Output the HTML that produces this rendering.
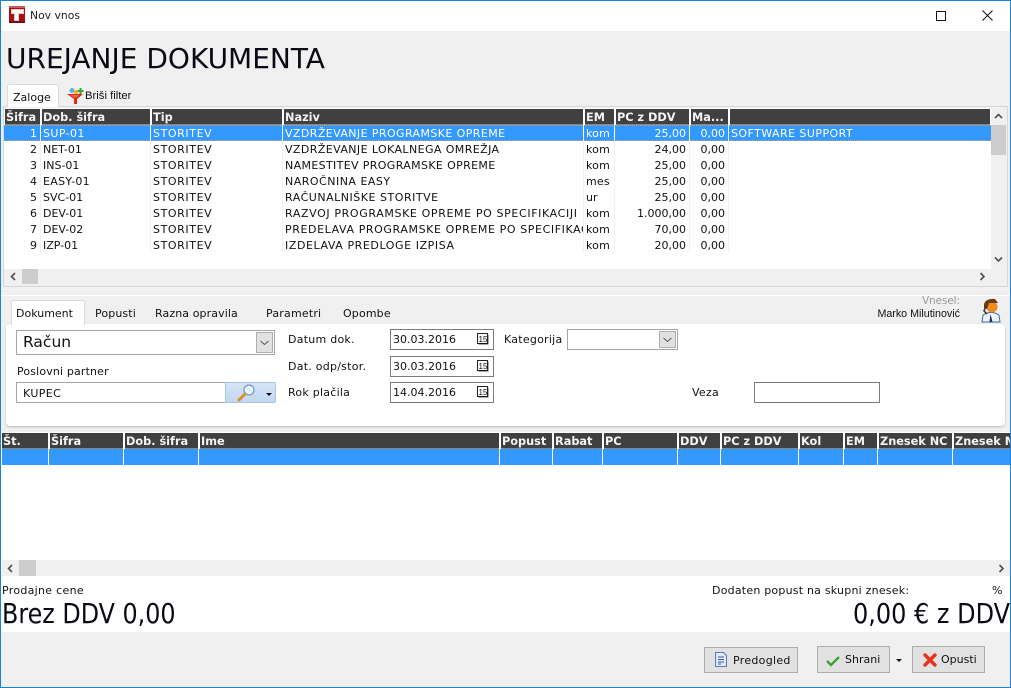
<!DOCTYPE html>
<html><head><meta charset="utf-8"><title>Nov vnos</title>
<style>
*{box-sizing:border-box}
html,body{margin:0;padding:0}
body{width:1011px;height:688px;position:relative;overflow:hidden;background:#f0f0f0;font-family:"DejaVu Sans","Liberation Sans",sans-serif;font-size:11px;color:#111}
.a,.t,.h,.c,.r{position:absolute}
.t,.h,.c,.r{white-space:nowrap;line-height:16px;height:16px}
.c,.r{line-height:18px}
.h{background:#404040;color:#f4f4f4;font-weight:bold;padding-left:1px;font-size:11.300px;line-height:17px;overflow:hidden;border-bottom:1px solid #888}
.c{overflow:hidden;padding-left:2px}
.r{text-align:right;padding-right:3px}
.w{color:#fff}
.l{letter-spacing:.25px}
.sep{position:absolute;width:1px;background:#f0f0f0}
.in{position:absolute;background:#fff;border:1px solid #7a7a7a;height:21px;line-height:19px;padding-left:3px}
.btn{position:absolute;background:#e1e1e1;border:1px solid #adadad;height:27px;line-height:25px}
.arr{position:absolute;width:0;height:0;border-left:3px solid transparent;border-right:3px solid transparent;border-top:3px solid #111}
.dot{position:absolute;left:4px;width:987px;height:1px;background:repeating-linear-gradient(90deg,#c9a070 0 1px,#3399ff 1px 2px)}
</style></head><body>
<!-- window -->
<div class="a" style="left:0;top:0;width:1011px;height:31px;background:#fff"></div>
<svg class="a" style="left:9px;top:6px" width="16" height="17" viewBox="0 0 16 17"><rect width="16" height="17" fill="#a81016"/><rect x="0" y="0" width="16" height="2" fill="#c95a5e"/><rect x="0" y="15" width="16" height="2" fill="#7a0a0e"/><path d="M2 3H15V8H10V15H5V8H2Z" fill="#f0c8c8"/><path d="M3 4H14V7H9V14H6V7H3Z" fill="#fff"/></svg>
<div class="t" style="left:30px;top:8px;font-size:10.800px;color:#222">Nov vnos</div>
<div class="a" style="left:936px;top:11px;width:10px;height:10px;border:1px solid #111"></div>
<svg class="a" style="left:982px;top:10px" width="11" height="11"><path d="M.5 .5L10.5 10.5M10.5 .5L.5 10.5" stroke="#111" stroke-width="1"/></svg>
<div class="t" style="left:6px;top:43px;height:32px;line-height:32px;font-size:28px;color:#0a0a14">UREJANJE DOKUMENTA</div>

<!-- top tab -->
<div class="a" style="left:3px;top:106px;width:1005px;height:181px;border:1px solid #d4d9de;background:#f0f0f0"></div>
<div class="a" style="left:7px;top:84px;width:52px;height:23px;background:#fff;border:1px solid #d4dde2;border-bottom:0;border-radius:3px 3px 0 0"></div>
<div class="t" style="left:13px;top:90px;">Zaloge</div>
<svg class="a" style="left:67px;top:87px" width="17" height="18" viewBox="0 0 17 18"><path d="M0 7H16L10 12V17H7V12Z" fill="#e02a1c"/><path d="M3 8H12L9 10.500H7Z" fill="#f06a40"/><circle cx="5" cy="3.500" r="2.500" fill="#6ab0e8"/><circle cx="9" cy="5" r="2" fill="#f0b020"/><path d="M12.500 1h2v2h2v2h-2v2h-2v-2h-2v-2h2z" fill="#3aa830"/></svg>
<div class="t" style="left:85px;top:88px;font-family:'Liberation Sans',sans-serif;font-size:11.300px;">Briši filter</div>

<!-- top grid -->
<div class="a" style="left:4px;top:108px;width:987px;height:161px;background:#fff"></div>
<div class="h" style="left:5px;top:109px;width:35px">Šifra</div>
<div class="h" style="left:42px;top:109px;width:108px">Dob. šifra</div>
<div class="h" style="left:152px;top:109px;width:130px">Tip</div>
<div class="h" style="left:284px;top:109px;width:299px">Naziv</div>
<div class="h" style="left:585px;top:109px;width:29px">EM</div>
<div class="h" style="left:616px;top:109px;width:73px">PC z DDV</div>
<div class="h" style="left:691px;top:109px;width:37px">Ma...</div>
<div class="h" style="left:730px;top:109px;width:260px"></div>
<div class="a" style="left:4px;top:125px;width:987px;height:16px;background:#3399ff"></div>
<div class="dot" style="top:125px"></div><div class="dot" style="top:140px"></div>
<div class="sep" style="left:40px;top:141px;height:112px"></div><div class="sep" style="left:150px;top:141px;height:112px"></div><div class="sep" style="left:282px;top:141px;height:112px"></div><div class="sep" style="left:583px;top:141px;height:112px"></div><div class="sep" style="left:614px;top:141px;height:112px"></div><div class="sep" style="left:689px;top:141px;height:112px"></div><div class="sep" style="left:728px;top:141px;height:112px"></div>
<div class="sep" style="left:40px;top:125px;height:16px;background:#fff"></div><div class="sep" style="left:150px;top:125px;height:16px;background:#fff"></div><div class="sep" style="left:282px;top:125px;height:16px;background:#fff"></div><div class="sep" style="left:583px;top:125px;height:16px;background:#fff"></div><div class="sep" style="left:614px;top:125px;height:16px;background:#fff"></div><div class="sep" style="left:689px;top:125px;height:16px;background:#fff"></div><div class="sep" style="left:728px;top:125px;height:16px;background:#fff"></div>

<div class="r w" style="left:4px;top:125px;width:36px">1</div><div class="c w" style="left:41px;top:125px;width:109px;letter-spacing:.4px">SUP-01</div><div class="c w" style="left:151px;top:125px;width:131px;letter-spacing:.6px">STORITEV</div><div class="c w" style="left:283px;top:125px;width:300px;letter-spacing:.41px">VZDRŽEVANJE PROGRAMSKE OPREME</div><div class="c w" style="left:584px;top:125px;width:30px;letter-spacing:.2px">kom</div><div class="r w" style="left:615px;top:125px;width:74px">25,00</div><div class="r w" style="left:690px;top:125px;width:38px">0,00</div><div class="c w" style="left:729px;top:125px;width:260px;letter-spacing:.45px">SOFTWARE SUPPORT</div>

<div class="r" style="left:4px;top:141px;width:36px">2</div><div class="c" style="left:41px;top:141px;width:109px">NET-01</div><div class="c" style="left:151px;top:141px;width:131px;letter-spacing:.6px">STORITEV</div><div class="c" style="left:283px;top:141px;width:300px;letter-spacing:.41px">VZDRŽEVANJE LOKALNEGA OMREŽJA</div><div class="c" style="left:584px;top:141px;width:30px;letter-spacing:.2px">kom</div><div class="r" style="left:615px;top:141px;width:74px">24,00</div><div class="r" style="left:690px;top:141px;width:38px">0,00</div>

<div class="r" style="left:4px;top:157px;width:36px">3</div><div class="c" style="left:41px;top:157px;width:109px">INS-01</div><div class="c" style="left:151px;top:157px;width:131px;letter-spacing:.6px">STORITEV</div><div class="c" style="left:283px;top:157px;width:300px;letter-spacing:.36px">NAMESTITEV PROGRAMSKE OPREME</div><div class="c" style="left:584px;top:157px;width:30px;letter-spacing:.2px">kom</div><div class="r" style="left:615px;top:157px;width:74px">25,00</div><div class="r" style="left:690px;top:157px;width:38px">0,00</div>

<div class="r" style="left:4px;top:173px;width:36px">4</div><div class="c" style="left:41px;top:173px;width:109px;letter-spacing:.3px">EASY-01</div><div class="c" style="left:151px;top:173px;width:131px;letter-spacing:.6px">STORITEV</div><div class="c" style="left:283px;top:173px;width:300px;letter-spacing:.5px">NAROČNINA EASY</div><div class="c" style="left:584px;top:173px;width:30px;letter-spacing:.2px">mes</div><div class="r" style="left:615px;top:173px;width:74px">25,00</div><div class="r" style="left:690px;top:173px;width:38px">0,00</div>

<div class="r" style="left:4px;top:189px;width:36px">5</div><div class="c" style="left:41px;top:189px;width:109px">SVC-01</div><div class="c" style="left:151px;top:189px;width:131px;letter-spacing:.6px">STORITEV</div><div class="c" style="left:283px;top:189px;width:300px;letter-spacing:.52px">RAČUNALNIŠKE STORITVE</div><div class="c" style="left:584px;top:189px;width:30px">ur</div><div class="r" style="left:615px;top:189px;width:74px">25,00</div><div class="r" style="left:690px;top:189px;width:38px">0,00</div>

<div class="r" style="left:4px;top:205px;width:36px">6</div><div class="c" style="left:41px;top:205px;width:109px">DEV-01</div><div class="c" style="left:151px;top:205px;width:131px;letter-spacing:.6px">STORITEV</div><div class="c" style="left:283px;top:205px;width:300px;letter-spacing:.63px">RAZVOJ PROGRAMSKE OPREME PO SPECIFIKACIJI</div><div class="c" style="left:584px;top:205px;width:30px;letter-spacing:.2px">kom</div><div class="r" style="left:615px;top:205px;width:74px">1.000,00</div><div class="r" style="left:690px;top:205px;width:38px">0,00</div>

<div class="r" style="left:4px;top:221px;width:36px">7</div><div class="c" style="left:41px;top:221px;width:109px">DEV-02</div><div class="c" style="left:151px;top:221px;width:131px;letter-spacing:.6px">STORITEV</div><div class="c" style="left:283px;top:221px;width:300px;letter-spacing:.6px">PREDELAVA PROGRAMSKE OPREME PO SPECIFIKACIJI</div><div class="c" style="left:584px;top:221px;width:30px;letter-spacing:.2px">kom</div><div class="r" style="left:615px;top:221px;width:74px">70,00</div><div class="r" style="left:690px;top:221px;width:38px">0,00</div>

<div class="r" style="left:4px;top:237px;width:36px">9</div><div class="c" style="left:41px;top:237px;width:109px">IZP-01</div><div class="c" style="left:151px;top:237px;width:131px;letter-spacing:.6px">STORITEV</div><div class="c" style="left:283px;top:237px;width:300px;letter-spacing:.58px">IZDELAVA PREDLOGE IZPISA</div><div class="c" style="left:584px;top:237px;width:30px;letter-spacing:.2px">kom</div><div class="r" style="left:615px;top:237px;width:74px">20,00</div><div class="r" style="left:690px;top:237px;width:38px">0,00</div>

<!-- top scrollbars -->
<div class="a" style="left:991px;top:108px;width:15px;height:161px;background:#f0f0f0"></div>
<div class="a" style="left:991px;top:125px;width:15px;height:30px;background:#cdcdcd"></div>
<svg class="a" style="left:994px;top:113px" width="9" height="7"><path d="M1 5L4.500 1.500L8 5" fill="none" stroke="#505050" stroke-width="1.600"/></svg>
<svg class="a" style="left:994px;top:256px" width="9" height="7"><path d="M1 1.500L4.500 5L8 1.500" fill="none" stroke="#505050" stroke-width="1.600"/></svg>
<div class="a" style="left:22px;top:269px;width:16px;height:15px;background:#cdcdcd"></div>
<svg class="a" style="left:10px;top:272px" width="7" height="9"><path d="M5 1L1.500 4.500L5 8" fill="none" stroke="#505050" stroke-width="1.600"/></svg>
<svg class="a" style="left:979px;top:272px" width="7" height="9"><path d="M1.500 1L5 4.500L1.500 8" fill="none" stroke="#505050" stroke-width="1.600"/></svg>

<!-- middle tabs -->
<div class="a" style="left:1px;top:295px;width:1009px;height:1px;background:#fff"></div>
<div class="a" style="left:6px;top:324px;width:999px;height:102px;background:#fff;border-radius:4px;box-shadow:0 1px 2px #bbb"></div>
<div class="a" style="left:11px;top:300px;width:74px;height:25px;background:#fff;border:1px solid #d4dde2;border-bottom:0;border-radius:3px 3px 0 0"></div>
<div class="t" style="left:16px;top:306px;">Dokument</div>
<div class="t" style="left:95px;top:306px;letter-spacing:.12px">Popusti</div>
<div class="t" style="left:155px;top:306px;letter-spacing:.1px">Razna opravila</div>
<div class="t" style="left:266px;top:306px;letter-spacing:.2px">Parametri</div>
<div class="t" style="left:343px;top:306px;letter-spacing:.15px">Opombe</div>
<div class="t" style="left:901px;top:295px;width:59px;text-align:right;color:#9a9a9a;font-size:10.300px;line-height:13px;height:13px">Vnesel:</div>
<div class="t" style="left:860px;top:307px;width:100px;text-align:right;font-family:'Liberation Sans',sans-serif;font-size:10.700px;line-height:14px;height:14px">Marko Milutinović</div>
<svg class="a" style="left:980px;top:298px" width="21" height="25" viewBox="0 0 21 25"><path d="M3 17Q11 12 19 17L20 24H2Z" fill="#eef4fb" stroke="#3a6aa8"/><path d="M10.500 16L12.500 24H9.500Z" fill="#1a2a70"/><circle cx="12" cy="9" r="5.500" fill="#ef8a1c"/><path d="M4 6Q6 0 15 1L18 5L9 5L7 11L4 10Z" fill="#6a3c10"/><path d="M6 8L4 13L7 16" fill="none" stroke="#333" stroke-width="1.500"/></svg>

<!-- form -->
<div class="a" style="left:16px;top:330px;width:259px;height:25px;border:1px solid #a6a6a6;background:#fff"></div>
<div class="t" style="left:23px;top:333px;font-size:15.500px;height:19px;line-height:19px">Račun</div>
<div class="a" style="left:256px;top:332px;width:17px;height:21px;background:#e1e1e1;border:1px solid #adadad"></div>
<svg class="a" style="left:260px;top:340px" width="9" height="6"><path d="M.5 1L4.500 4.500L8.500 1" fill="none" stroke="#555"/></svg>
<div class="t l" style="left:17px;top:364px;letter-spacing:.15px">Poslovni partner</div>
<div class="in" style="left:16px;top:382px;width:210px;border-color:#a6a6a6;padding-left:6px;line-height:21px;letter-spacing:.4px">KUPEC</div>
<div class="a" style="left:225px;top:382px;width:51px;height:21px;background:linear-gradient(#d6e4f6,#c3d8f2);border:1px solid #a9c4e6;border-radius:0 2px 2px 0"></div>
<svg class="a" style="left:237px;top:383px" width="19" height="19" viewBox="0 0 19 19"><path d="M2 17L8 11" stroke="#e88a1c" stroke-width="3" stroke-linecap="round"/><circle cx="12" cy="7" r="5" fill="#e4f5ff" stroke="#7a9ab8" stroke-width="1.300"/></svg>
<div class="arr" style="left:266px;top:393px"></div>

<div class="t l" style="left:288px;top:332px;">Datum dok.</div>
<div class="t l" style="left:288px;top:359px;">Dat. odp/stor.</div>
<div class="t l" style="left:288px;top:385px;">Rok plačila</div>
<div class="in" style="left:390px;top:329px;width:104px;padding-left:2px">30.03.2016</div>
<div class="in" style="left:390px;top:356px;width:104px;padding-left:2px">30.03.2016</div>
<div class="in" style="left:390px;top:382px;width:104px;padding-left:2px">14.04.2016</div>
<svg class="a" style="left:477px;top:333px" width="12" height="12"><rect x="1.500" y="1.500" width="10" height="10" fill="#555"/><rect x=".5" y=".5" width="10" height="10" fill="#fff" stroke="#222"/><text x="1.500" y="9" font-size="8" font-family="Liberation Sans" fill="#111" text-decoration="underline">15</text></svg>
<svg class="a" style="left:477px;top:360px" width="12" height="12"><rect x="1.500" y="1.500" width="10" height="10" fill="#555"/><rect x=".5" y=".5" width="10" height="10" fill="#fff" stroke="#222"/><text x="1.500" y="9" font-size="8" font-family="Liberation Sans" fill="#111" text-decoration="underline">15</text></svg>
<svg class="a" style="left:477px;top:386px" width="12" height="12"><rect x="1.500" y="1.500" width="10" height="10" fill="#555"/><rect x=".5" y=".5" width="10" height="10" fill="#fff" stroke="#222"/><text x="1.500" y="9" font-size="8" font-family="Liberation Sans" fill="#111" text-decoration="underline">15</text></svg>
<div class="t l" style="left:504px;top:332px;">Kategorija</div>
<div class="a" style="left:567px;top:329px;width:111px;height:21px;border:1px solid #a6a6a6;background:#fff"></div>
<div class="a" style="left:659px;top:331px;width:17px;height:17px;background:#e1e1e1;border:1px solid #adadad"></div>
<svg class="a" style="left:663px;top:337px" width="9" height="6"><path d="M.5 1L4.500 4.500L8.500 1" fill="none" stroke="#555"/></svg>
<div class="t l" style="left:692px;top:385px;">Veza</div>
<div class="in" style="left:754px;top:382px;width:126px"></div>

<!-- lower grid -->
<div class="a" style="left:1px;top:432px;width:1009px;height:143px;background:#fff"></div>
<div class="h" style="left:2px;top:433px;width:46px">Št.</div>
<div class="h" style="left:50px;top:433px;width:73px">Šifra</div>
<div class="h" style="left:125px;top:433px;width:73px">Dob. šifra</div>
<div class="h" style="left:200px;top:433px;width:299px">Ime</div>
<div class="h" style="left:501px;top:433px;width:51px">Popust</div>
<div class="h" style="left:554px;top:433px;width:48px">Rabat</div>
<div class="h" style="left:604px;top:433px;width:73px">PC</div>
<div class="h" style="left:679px;top:433px;width:41px">DDV</div>
<div class="h" style="left:722px;top:433px;width:76px">PC z DDV</div>
<div class="h" style="left:800px;top:433px;width:43px">Kol</div>
<div class="h" style="left:845px;top:433px;width:32px">EM</div>
<div class="h" style="left:879px;top:433px;width:73px">Znesek NC</div>
<div class="h" style="left:954px;top:433px;width:56px">Znesek MPC</div>
<div class="a" style="left:2px;top:449px;width:1008px;height:16px;background:#3399ff"></div>
<div class="sep" style="left:48px;top:449px;height:16px;background:#fff"></div><div class="sep" style="left:123px;top:449px;height:16px;background:#fff"></div><div class="sep" style="left:198px;top:449px;height:16px;background:#fff"></div><div class="sep" style="left:499px;top:449px;height:16px;background:#fff"></div><div class="sep" style="left:552px;top:449px;height:16px;background:#fff"></div><div class="sep" style="left:602px;top:449px;height:16px;background:#fff"></div><div class="sep" style="left:677px;top:449px;height:16px;background:#fff"></div><div class="sep" style="left:720px;top:449px;height:16px;background:#fff"></div><div class="sep" style="left:798px;top:449px;height:16px;background:#fff"></div><div class="sep" style="left:843px;top:449px;height:16px;background:#fff"></div><div class="sep" style="left:877px;top:449px;height:16px;background:#fff"></div><div class="sep" style="left:952px;top:449px;height:16px;background:#fff"></div>
<div class="a" style="left:2px;top:560px;width:1008px;height:16px;background:#f0f0f0"></div>
<div class="a" style="left:19px;top:560px;width:17px;height:16px;background:#cdcdcd"></div>
<svg class="a" style="left:7px;top:564px" width="7" height="9"><path d="M5 1L1.500 4.500L5 8" fill="none" stroke="#505050" stroke-width="1.600"/></svg>
<svg class="a" style="left:998px;top:564px" width="7" height="9"><path d="M1.500 1L5 4.500L1.500 8" fill="none" stroke="#505050" stroke-width="1.600"/></svg>

<!-- totals -->
<div class="a" style="left:1px;top:576px;width:1009px;height:56px;background:#fff"></div>
<div class="t" style="left:2px;top:583px;letter-spacing:.3px">Prodajne cene</div>
<div class="t" style="left:2px;top:598px;height:34px;line-height:34px;font-size:27.400px;color:#0a0a14;transform:scaleX(.87);transform-origin:0 50%">Brez DDV 0,00</div>
<div class="t" style="left:712px;top:583px;letter-spacing:.22px">Dodaten popust na skupni znesek:</div>
<div class="t" style="left:992px;top:583px;">%</div>
<div class="t" style="left:760px;top:598px;width:250px;text-align:right;height:34px;line-height:34px;font-size:27.400px;color:#0a0a14;transform:scaleX(.875);transform-origin:100% 50%">0,00 € z DDV</div>

<!-- buttons -->
<div class="btn" style="left:704px;top:647px;width:94px;height:26px"></div>
<svg class="a" style="left:715px;top:652px" width="12" height="15" viewBox="0 0 12 15"><path d="M.5 .5H8.500L11.500 3.500V14.500H.5Z" fill="#dfe9f8" stroke="#5a7ab8"/><path d="M3 5H9M3 7.500H9M3 10H9M3 12H6" stroke="#3a5a98"/></svg>
<div class="t" style="left:733px;top:653px;letter-spacing:.3px">Predogled</div>
<div class="btn" style="left:817px;top:646px;width:73px"></div>
<svg class="a" style="left:826px;top:655px" width="14" height="12" viewBox="0 0 14 12"><path d="M1 6L5 10L13 2" fill="none" stroke="#3aa030" stroke-width="2.300"/></svg>
<div class="t" style="left:845px;top:652px;">Shrani</div>
<div class="arr" style="left:896px;top:659px"></div>
<div class="btn" style="left:912px;top:646px;width:73px"></div>
<svg class="a" style="left:923px;top:653px" width="14" height="14" viewBox="0 0 14 14"><path d="M2 2L12 12M12 2L2 12" stroke="#e8301c" stroke-width="3.400" stroke-linecap="round"/></svg>
<div class="t" style="left:941px;top:652px;">Opusti</div>

<!-- window border -->
<div class="a" style="left:0;top:0;width:1011px;height:688px;border:1px solid #1883d7;pointer-events:none"></div>
</body></html>
